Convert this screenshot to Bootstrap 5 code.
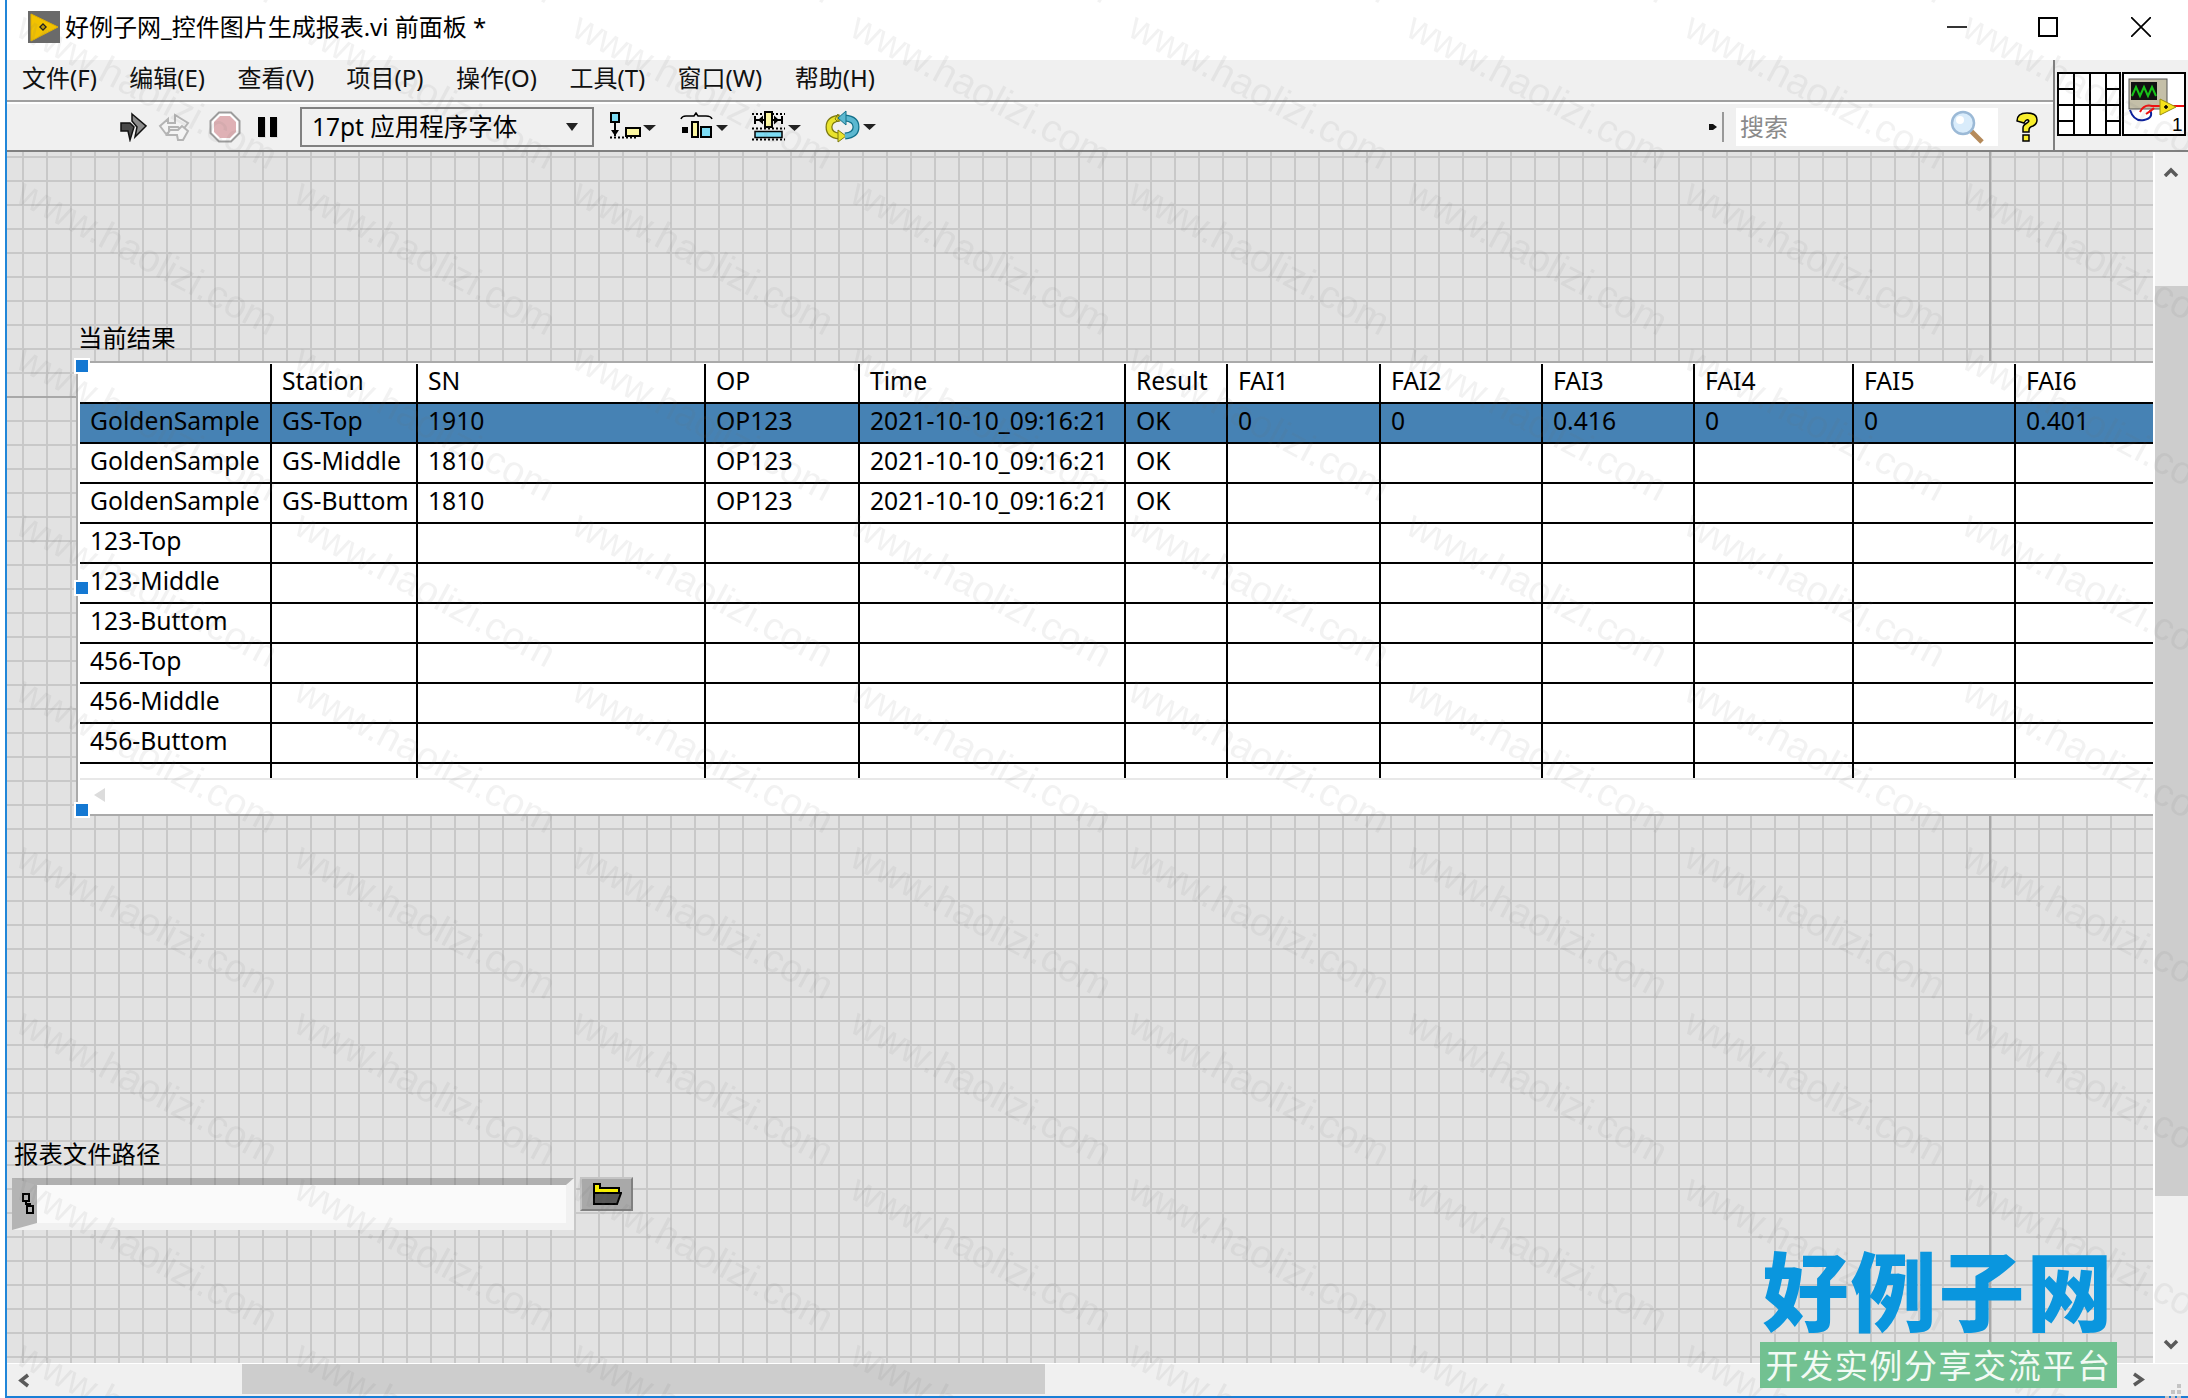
<!DOCTYPE html>
<html lang="zh-CN">
<head>
<meta charset="utf-8">
<title>好例子网_控件图片生成报表.vi 前面板 *</title>
<link href="https://cdn.jsdelivr.net/npm/bootstrap@5.3.0/dist/css/bootstrap.min.css" rel="stylesheet">
<style>
html,body{margin:0;height:1398px;overflow:hidden;background:#fff}
body{position:relative;width:2188px;font-family:"Noto Sans","Noto Sans CJK SC",sans-serif;color:#000}
svg{display:block;flex:none}
.lv-win{margin-left:5px;height:1398px;border-left:2px solid #2186d8;border-bottom:2px solid #1a7ed6;display:flex;flex-direction:column}
.lv-title{height:60px;flex:none;background:#fff;padding:0 0 6px 21px;font-size:24px;gap:5px}
.lv-title-btns{margin-left:auto;gap:71px;padding-right:37px}
.lv-close{margin-left:2px}
.lv-top{height:92px;flex:none;border-bottom:2px solid #808080;background:#f0f0f0}
.lv-left{width:2046px;flex:none}
.lv-menu{height:42px;border-bottom:2px solid #a0a0a0;font-size:24px;padding:0 0 4px 15px;gap:32.400px;background:#f0f0f0}
.lv-menu-item{padding:0;color:#111;line-height:36px;white-space:nowrap}
.lv-tool{height:46px;border-top:2px solid #fff;box-sizing:content-box}
.lv-font{width:294px;height:40px;border:2px solid #808080;padding:0 14px 0 10px;font-size:24.500px;line-height:34px;white-space:nowrap}
.lv-font-caret{margin-left:auto}
.m11{margin-left:11px}.m12{margin-left:12px}.mr15{margin-right:15px}.m15{margin-left:15px}.m16{margin-left:16px}.m19{margin-left:19px}.m22{margin-left:22px}.m24{margin-left:24px}.m112{margin-left:112px}
.lv-search{width:262px;height:38px;background:#fff;padding:0 14px 0 4px;font-size:24px;color:#8a8a8a}
.lv-conn{flex:1;border-left:2px solid #808080;padding:12px 0 0 2px;gap:1px}
.lv-mid{flex:1;min-height:0}
.lv-canvas{flex:1;min-width:0;overflow:hidden;border-right:2px solid #fff;background-color:#e2e2e2;
 background-image:linear-gradient(90deg,transparent 1982px,#a8a8a8 1982px,#a8a8a8 1984px,transparent 1984px),linear-gradient(transparent 244px,#a8a8a8 244px,#a8a8a8 246px,transparent 246px),linear-gradient(90deg,#c8c8c8 2px,transparent 2px),linear-gradient(#c8c8c8 2px,transparent 2px);
 background-size:100% 100%,100% 100%,24px 24px,24px 24px;background-position:0 0,0 0,15px 0,0 4px;background-repeat:no-repeat,no-repeat,repeat,repeat;padding-top:169px}
.lv-label{font-family:"Noto Sans CJK SC","Noto Sans",sans-serif;font-size:24.400px;line-height:32px;white-space:nowrap}
.lv-label-table{margin-left:71px;margin-bottom:8px}
.lv-frame{position:relative;margin-left:69px;width:2078px;height:455px;background:#fff;border-top:2px solid #aaa;border-bottom:2px solid #aaa;border-left:2px solid #aaa;padding:1px 0 0 2px}
.lv-grid{table-layout:fixed;width:2074px;border-collapse:separate;border-spacing:0;margin:0;font-size:24.700px;--bs-table-bg:transparent}
.lv-grid td{height:40px;padding:0 0 3px 10px;border:0;border-bottom:2px solid #000;border-right:2px solid #000;vertical-align:middle;line-height:1;white-space:nowrap;overflow:hidden;box-shadow:none;color:#000;background:transparent}
.lv-grid td:last-child{border-right:0}
.lv-grid tr.lv-sel td{background:#4682b4}
.lv-grid tr.lv-fill td{height:14px;border-bottom:0;padding:0}
.lv-cap{height:36px;border-top:2px solid #e8e8e8;padding:8px 0 0 14px}
.lv-handle{position:absolute;left:-4px;width:16px;height:16px;background:#1478d2;border:2px solid #fff}
.lv-h1{top:-5px}.lv-h2{top:217px}.lv-h3{top:439px}
.lv-pathlabel{margin:321px 0 9px 7px}
.lv-pathrow{margin-left:5px;align-items:flex-start}
.lv-path{width:562px;height:52px;background:#fafafa;background-clip:padding-box;border-style:solid;border-width:7px 8px 7px 25px;border-color:rgba(90,90,90,.36) #f1f1f1 #f1f1f1 #b4b4b4;display:flex}
.lv-path-ico{margin:8px 0 0 -15px}
.lv-browse{width:53px;height:34px;margin-left:6px;margin-top:-1px;padding:0;background:#a9a9a9;border:2px solid;border-color:#c4c4c4 #808080 #808080 #c4c4c4;border-radius:0;display:flex;align-items:center;justify-content:center}
.lv-vbar{width:33px;flex:none;background:#f0f0f0}
.lv-vtop{height:134px;padding:15px 0 0 8px}
.lv-vthumb{height:910px;background:#cdcdcd}
.lv-vbot{height:167px;padding:143px 0 0 8px}
.lv-hbar{height:33px;flex:none;background:#f0f0f0;border-top:1px solid #fff}
.lv-hleft{width:235px;padding:9px 0 0 11px}
.lv-hthumb{width:803px;height:30px;background:#cdcdcd}
.lv-hright{padding:8px 0 0 1087px}
.lv-grip{margin:12px 0 0 20px}
.lv-wm{position:absolute;left:0;top:0;z-index:10;pointer-events:none}
.lv-wm text{font-family:"Liberation Sans",sans-serif;font-size:39px;fill:#6e6e6e;fill-opacity:.085}
.lv-logo{position:absolute;left:1760px;top:1244px;width:357px;z-index:11;pointer-events:none;font-family:"Noto Sans CJK SC",sans-serif}
.lv-logo-name{font-size:86px;font-weight:900;line-height:88px;color:#0a96de;white-space:nowrap;text-align:center;letter-spacing:2px}
.lv-logo-sub{height:46px;margin-top:10px;background:#72c191;color:#f2faf4;font-size:33px;line-height:44px;text-align:center;white-space:nowrap;letter-spacing:1.6px}
</style>
</head>
<body>
<div class="lv-win">
  <div class="lv-title d-flex align-items-center">
    <svg width="32" height="32" viewBox="0 0 32 32"><rect width="32" height="32" fill="#6a6a6a"/><path d="M3 3 L30 16 L3 30Z" fill="#f2c200" stroke="#e0b000"/><path d="M11 16l4-4 4 4-4 4z" fill="#222"/><path d="M15 14v4M13 16h4" stroke="#f2c200"/></svg>
    <span>好例子网_控件图片生成报表.vi 前面板 *</span>
    <div class="lv-title-btns d-flex align-items-center">
      <svg width="20" height="20" viewBox="0 0 20 20"><path d="M0 10h20" stroke="#000" stroke-width="1.6"/></svg>
      <svg width="20" height="20" viewBox="0 0 20 20"><rect x="1" y="1" width="18" height="18" fill="none" stroke="#000" stroke-width="2"/></svg>
      <svg class="lv-close" width="20" height="20" viewBox="0 0 20 20"><path d="M0 0l20 20M20 0L0 20" stroke="#000" stroke-width="1.7"/></svg>
    </div>
  </div>
  <div class="lv-top d-flex">
    <div class="lv-left">
      <nav class="lv-menu d-flex align-items-center">
        <span class="lv-menu-item">文件(F)</span><span class="lv-menu-item">编辑(E)</span><span class="lv-menu-item">查看(V)</span><span class="lv-menu-item">项目(P)</span><span class="lv-menu-item">操作(O)</span><span class="lv-menu-item">工具(T)</span><span class="lv-menu-item">窗口(W)</span><span class="lv-menu-item">帮助(H)</span>
      </nav>
      <div class="lv-tool d-flex align-items-center">
        <svg class="m112" width="28" height="30" viewBox="0 0 28 30"><path d="M13 2L27 14 16 25 18 15 13 9Z" fill="#8c8c8c" stroke="#111" stroke-width="1.500"/><path d="M2 11H11L15 15 11 28 9 19H2Z" fill="#4a4a4a" stroke="#111" stroke-width="1.500"/></svg>
        <svg class="m11" width="32" height="30" viewBox="0 0 32 30" fill="#f4f4f4" stroke="#b4b4b4" stroke-width="2"><path d="M2 14l8-7v4h7V3l13 8-6 8-4-4h-9v3h3l-6 4z"/><path d="M9 23h10l1 5h5l5-9-6-5-4 4h-8z"/></svg>
        <svg class="m19" width="32" height="32" viewBox="0 0 32 32"><path d="M10 1.500h12L30.500 10v12L22 30.500H10L1.500 22V10Z" fill="#fff" stroke="#9c9c9c" stroke-width="2"/><path d="M11 5h10l6 6v10l-6 6H11l-6-6V11Z" fill="#dfb1b5"/></svg>
        <svg class="m15" width="22" height="22" viewBox="0 0 22 22"><rect x="3" y="2" width="7" height="20" fill="#ddd"/><rect x="15" y="2" width="7" height="20" fill="#ddd"/><rect x="2" y="1" width="7" height="20"/><rect x="14" y="1" width="7" height="20"/></svg>
        <div class="lv-font m22 d-flex align-items-center"><span>17pt 应用程序字体</span><svg class="lv-font-caret" width="12" height="8" viewBox="0 0 12 8"><path d="M0 0h12L6 8z" fill="#222"/></svg></div>
        <svg class="m16" width="46" height="30" viewBox="0 0 46 30"><rect x="1" y="1" width="8" height="9" fill="#7ddcf4" stroke="#000" stroke-width="2"/><path d="M5 11v13" stroke="#000" stroke-width="2"/><path d="M1 18h8l-4 6z"/><path d="M0 25.500h27" stroke="#000" stroke-dasharray="2 2" stroke-width="2"/><rect x="16" y="16" width="14" height="8" fill="#fbf6a0" stroke="#000" stroke-width="2"/><path d="M33 13h13l-6.500 6z" fill="#222"/></svg>
        <svg class="m24" width="48" height="30" viewBox="0 0 48 30"><path d="M1 7q1-3 5-3h8l2-3 2 3h8q5 0 6 3" fill="none" stroke="#000" stroke-width="1.500"/><rect x="2" y="15" width="6" height="6"/><rect x="12" y="10" width="6" height="15" fill="#fbf6a0" stroke="#000" stroke-width="2"/><rect x="21" y="15" width="10" height="10" fill="#7ddcf4" stroke="#000" stroke-width="2"/><path d="M36 13h12l-6 6z" fill="#222"/></svg>
        <svg class="m24" width="49" height="32" viewBox="0 0 49 32"><path d="M0 3h33M0 28.500h33M0 17.500h33" stroke="#000" stroke-dasharray="2 2" stroke-width="2"/><rect x="13" y="1" width="7" height="15" fill="#fbf6a0" stroke="#000" stroke-width="2"/><path d="M12 9H3M21 9h9M3 5v8M30 5v8" stroke="#000" stroke-width="2"/><path d="M11 4.500v9L6 9zM22 4.500v9L27 9z"/><rect x="3" y="20.500" width="27" height="6" fill="#7ddcf4" stroke="#000" stroke-width="1.500"/><path d="M36 14h13l-6.500 6z" fill="#222"/></svg>
        <svg class="m24" width="51" height="34" viewBox="0 0 51 34"><path d="M15 8Q4 9 4 17t10 9" fill="none" stroke="#7d7a10" stroke-width="7"/><path d="M15 8Q4 9 4 17t10 9" fill="none" stroke="#e9e32c" stroke-width="4.500"/><path d="M13 4l0 8-3-3zM13 20l8 6-8 6z" fill="#e9e32c" stroke="#7d7a10"/><path d="M20 8q11 1 11 9t-11 9" fill="none" stroke="#12708a" stroke-width="7"/><path d="M20 8q11 1 11 9t-11 9" fill="none" stroke="#5cb8d0" stroke-width="4.500"/><path d="M21 1v14l-8-7z" fill="#5cb8d0" stroke="#12708a"/><path d="M38 14h13l-6.500 6z" fill="#222"/></svg>
        <svg class="ms-auto" width="15" height="32" viewBox="0 0 15 32"><path d="M0 13h4l4 3-4 3H0z" fill="#111"/><path d="M14 1v30" stroke="#999" stroke-width="2"/></svg>
        <div class="lv-search m12 d-flex align-items-center justify-content-between"><span>搜索</span>
          <svg width="34" height="34" viewBox="0 0 34 34"><path d="M21 21l11 11" stroke="#b58a5a" stroke-width="5"/><circle cx="13" cy="13" r="11" fill="#d9ecfb" stroke="#9bb9d6" stroke-width="2.500"/><circle cx="10" cy="10" r="4" fill="#fff"/></svg></div>
        <svg class="m16 mr15" width="24" height="32" viewBox="0 0 24 32"><path d="M3 10q0-8 10-8t10 7q0 4-4 6-4 1-4 4v2H9v-4q0-3 4-5 3-2 1-3-2-1-4 3z" fill="#f8ee2c" stroke="#000" stroke-width="1.500"/><rect x="9" y="24" width="6" height="6" fill="#f8ee2c" stroke="#000" stroke-width="1.500"/></svg>
      </div>
    </div>
    <div class="lv-conn d-flex align-items-start">
      <svg width="64" height="64" viewBox="0 0 64 64"><rect x="1" y="1" width="62" height="62" fill="#fff" stroke="#000" stroke-width="2"/><path d="M17 1v62M33 1v62M49 1v62M1 17h16M1 33h62M1 49h16M49 17h14M49 49h14" stroke="#000" stroke-width="2" fill="none"/></svg>
      <svg width="64" height="64" viewBox="0 0 64 64"><rect x="1" y="1" width="62" height="62" fill="#fff" stroke="#000" stroke-width="2"/><rect x="7" y="7" width="38" height="30" fill="#c4bfa8" stroke="#555"/><rect x="9" y="10" width="26" height="18" fill="#111"/><path d="M10 24l4-9 4 9 4-9 4 9 4-9 4 9" stroke="#18c418" fill="none" stroke-width="2"/><path d="M8 38q4 12 14 10t6-10" fill="none" stroke="#0a1f9c" stroke-width="2"/><path d="M18 40q4-8 12-6h8M24 42q6-4 8-6M50 34h12" stroke="#e11" fill="none" stroke-width="2"/><path d="M38 27l16 8-16 8z" fill="#f5e31a" stroke="#9a8f10"/><path d="M42 35h4M44 33v4" stroke="#000" stroke-width="1.500"/><text x="50" y="59" font-family="Liberation Sans, sans-serif" font-size="19">1</text></svg>
    </div>
  </div>
  <div class="lv-mid d-flex">
    <main class="lv-canvas">
      <div class="lv-label lv-label-table">当前结果</div>
      <div class="lv-frame">
        <table class="table table-borderless lv-grid">
          <colgroup><col width="192"><col width="146"><col width="288"><col width="154"><col width="266"><col width="102"><col width="153"><col width="162"><col width="152"><col width="159"><col width="162"><col width="138"></colgroup>
          <tbody>
            <tr><td></td><td>Station</td><td>SN</td><td>OP</td><td>Time</td><td>Result</td><td>FAI1</td><td>FAI2</td><td>FAI3</td><td>FAI4</td><td>FAI5</td><td>FAI6</td></tr>
            <tr class="lv-sel"><td>GoldenSample</td><td>GS-Top</td><td>1910</td><td>OP123</td><td>2021-10-10_09:16:21</td><td>OK</td><td>0</td><td>0</td><td>0.416</td><td>0</td><td>0</td><td>0.401</td></tr>
            <tr><td>GoldenSample</td><td>GS-Middle</td><td>1810</td><td>OP123</td><td>2021-10-10_09:16:21</td><td>OK</td><td></td><td></td><td></td><td></td><td></td><td></td></tr>
            <tr><td>GoldenSample</td><td>GS-Buttom</td><td>1810</td><td>OP123</td><td>2021-10-10_09:16:21</td><td>OK</td><td></td><td></td><td></td><td></td><td></td><td></td></tr>
            <tr><td>123-Top</td><td></td><td></td><td></td><td></td><td></td><td></td><td></td><td></td><td></td><td></td><td></td></tr>
            <tr><td>123-Middle</td><td></td><td></td><td></td><td></td><td></td><td></td><td></td><td></td><td></td><td></td><td></td></tr>
            <tr><td>123-Buttom</td><td></td><td></td><td></td><td></td><td></td><td></td><td></td><td></td><td></td><td></td><td></td></tr>
            <tr><td>456-Top</td><td></td><td></td><td></td><td></td><td></td><td></td><td></td><td></td><td></td><td></td><td></td></tr>
            <tr><td>456-Middle</td><td></td><td></td><td></td><td></td><td></td><td></td><td></td><td></td><td></td><td></td><td></td></tr>
            <tr><td>456-Buttom</td><td></td><td></td><td></td><td></td><td></td><td></td><td></td><td></td><td></td><td></td><td></td></tr>
            <tr class="lv-fill"><td></td><td></td><td></td><td></td><td></td><td></td><td></td><td></td><td></td><td></td><td></td><td></td></tr>
          </tbody>
        </table>
        <div class="lv-cap"><svg width="12" height="14" viewBox="0 0 12 14"><path d="M11 0v14L0 7z" fill="#dcdcdc"/></svg></div>
        <span class="lv-handle lv-h1"></span><span class="lv-handle lv-h2"></span><span class="lv-handle lv-h3"></span>
      </div>
      <div class="lv-label lv-pathlabel">报表文件路径</div>
      <div class="lv-pathrow d-flex">
        <div class="lv-path"><svg class="lv-path-ico" width="12" height="22" viewBox="0 0 12 22" fill="none" stroke="#000" stroke-width="2"><rect x="1" y="1" width="6" height="7"/><rect x="5" y="13" width="6" height="7"/><path d="M4 8v3h4v2"/></svg></div>
        <button type="button" class="btn lv-browse" aria-label="浏览"><svg width="30" height="22" viewBox="0 0 30 22"><path d="M2 10H29L25 21H2Z" fill="#565656" stroke="#000" stroke-width="2"/><path d="M2 1H8V5H27V10H2Z" fill="#f8f000" stroke="#000" stroke-width="2"/></svg></button>
      </div>
    </main>
    <div class="lv-vbar">
      <div class="lv-vtop"><svg width="16" height="10" viewBox="0 0 16 10"><path d="M2 9l6-6 6 6" fill="none" stroke="#5a5a5a" stroke-width="3.500"/></svg></div>
      <div class="lv-vthumb"></div>
      <div class="lv-vbot"><svg width="16" height="11" viewBox="0 0 16 11"><path d="M2 2l6 6 6-6" fill="none" stroke="#5a5a5a" stroke-width="3.500"/></svg></div>
    </div>
  </div>
  <div class="lv-hbar d-flex">
    <div class="lv-hleft"><svg width="12" height="15" viewBox="0 0 12 15"><path d="M10 2L3 7.500l7 5.500" fill="none" stroke="#5a5a5a" stroke-width="3.500"/></svg></div>
    <div class="lv-hthumb"></div>
    <div class="lv-hright d-flex"><svg width="13" height="15" viewBox="0 0 13 15"><path d="M2 2l8 5.500-8 5.500" fill="none" stroke="#5a5a5a" stroke-width="3.500"/></svg>
      <svg class="lv-grip" width="17" height="17" viewBox="0 0 17 17" fill="#c4c4c4"><rect x="12" y="0" width="4" height="4"/><rect x="6" y="6" width="4" height="4"/><rect x="12" y="6" width="4" height="4"/><rect x="0" y="12" width="4" height="4"/><rect x="6" y="12" width="4" height="4"/><rect x="12" y="12" width="4" height="4"/></svg></div>
  </div>
</div>
<svg class="lv-wm" width="2188" height="1398" aria-hidden="true">
  <defs><pattern id="wm" x="10" y="843" width="278" height="166" patternUnits="userSpaceOnUse"><text transform="translate(4 22) rotate(28)">www.haolizi.com</text></pattern></defs>
  <rect width="2188" height="1398" fill="url(#wm)"/>
</svg>
<div class="lv-logo">
  <div class="lv-logo-name">好例子网</div>
  <div class="lv-logo-sub">开发实例分享交流平台</div>
</div>
<script src="https://cdn.jsdelivr.net/npm/bootstrap@5.3.0/dist/js/bootstrap.bundle.min.js"></script>
</body>
</html>
